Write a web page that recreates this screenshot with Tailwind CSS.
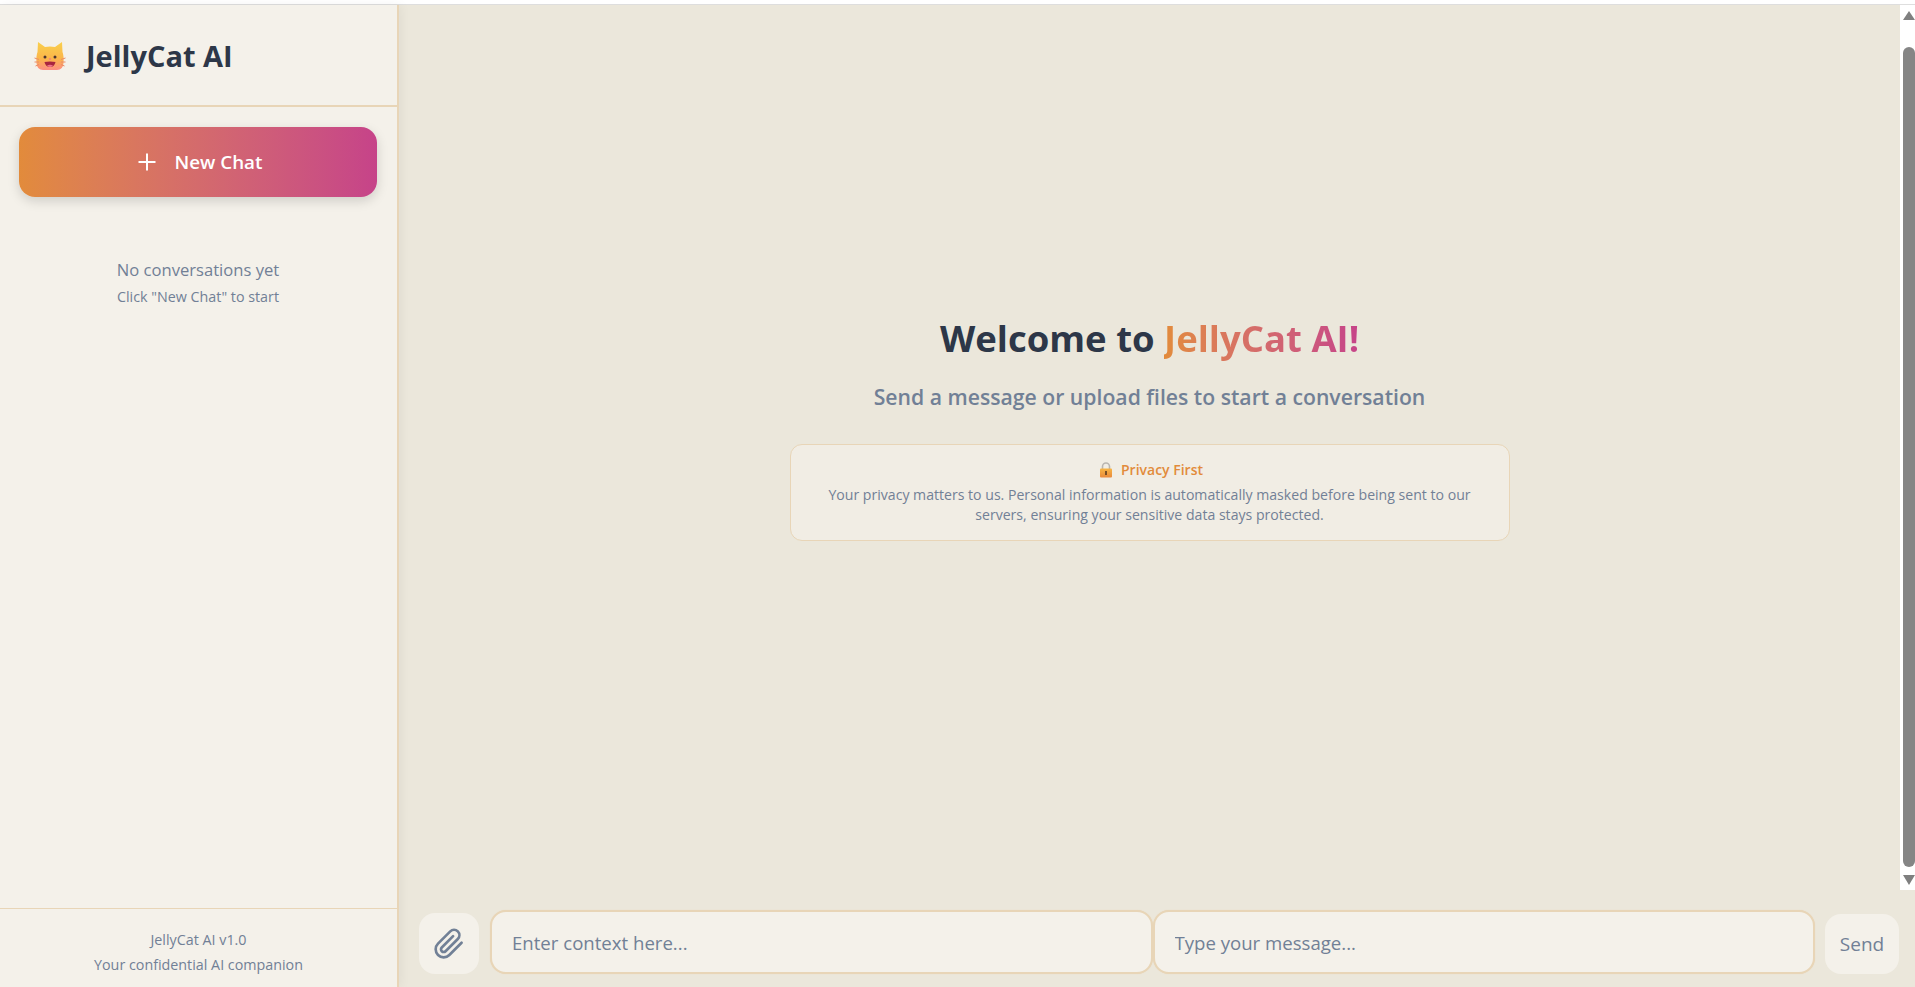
<!DOCTYPE html>
<html lang="en">
<head>
    <meta charset="UTF-8">
    <meta name="viewport" content="width=device-width, initial-scale=1.0">
    <title>JellyCat AI</title>
    <script src="https://cdn.jsdelivr.net/npm/@tailwindcss/browser@4"></script>
</head>
<body class="h-screen overflow-hidden flex flex-col bg-white font-['Open_Sans',sans-serif] text-[#718096]">
    <div class="h-[5px] shrink-0 bg-white border-b border-[#dedede]"></div>
    <div class="flex flex-1 min-h-0">
        <!-- Sidebar -->
        <aside class="relative z-10 w-[399px] shrink-0 flex flex-col bg-[#f4f1ea] border-r-2 border-[#e8d5b7] shadow-[2px_0_10px_rgba(0,0,0,0.05)]">
            <div class="h-[102px] shrink-0 flex items-center pl-[34px] gap-[20px] border-b-2 border-[#e8d5b7]">
                <svg class="w-[32px] h-[30px] mt-[2px]" viewBox="0 0 32 30">
                    <defs>
                        <linearGradient id="catFace" x1="0" y1="0" x2="0" y2="1">
                            <stop offset="0" stop-color="#f9d04c"/>
                            <stop offset="0.6" stop-color="#fbb54a"/>
                            <stop offset="1" stop-color="#fd8d84"/>
                        </linearGradient>
                    </defs>
                    <path d="M4 1 L11 6 Q16 5 21 6 L28 1 L28.500 11 Q30 15 29.500 22 Q29 29 23 29 H9 Q3 29 2.500 22 Q2 15 3.500 11 Z" fill="url(#catFace)"/>
                    <circle cx="11" cy="16" r="1.500" fill="#4a3330"/>
                    <circle cx="21" cy="16" r="1.500" fill="#4a3330"/>
                    <path d="M14.800 17.500 H17.200 L16 19 Z" fill="#f0609a"/>
                    <path d="M10.500 21 Q16 19.800 21.500 21 Q20.500 26 16 26 Q11.500 26 10.500 21 Z" fill="#a8253f"/>
                    <path d="M13 24.500 Q16 23 19 24.500 Q17.500 26 16 26 Q14.500 26 13 24.500 Z" fill="#f0708a"/>
                    <path d="M0.500 17 L5 18.500 M0.500 21 L5 21 M1.500 25 L5 23.500 M31.500 17 L27 18.500 M31.500 21 L27 21 M30.500 25 L27 23.500" stroke="#e98c68" stroke-width="1" fill="none"/>
                </svg>
                <h1 class="text-[29px] leading-none font-bold text-[#2d3748]">JellyCat AI</h1>
            </div>
            <div class="flex-1 pl-[19px] pr-[20px] pt-[20px]">
                <button class="w-full h-[70px] pl-[4px] flex items-center justify-center gap-[19px] rounded-[16px] bg-gradient-to-r from-[#e28b3b] to-[#c64389] text-white text-[18.800px] font-semibold shadow-[0_4px_12px_rgba(0,0,0,0.15)]">
                    <svg class="w-[18px] h-[18px]" viewBox="0 0 18 18" fill="none" stroke="#ffffff" stroke-width="2"><path d="M9 0.500 V17.500 M0.500 9 H17.500"/></svg>
                    <span>New Chat</span>
                </button>
                <div class="mt-[60px] text-center">
                    <p class="text-[16.600px] leading-[26px]">No conversations yet</p>
                    <p class="text-[14.300px] leading-[22px] mt-[3px]">Click "New Chat" to start</p>
                </div>
            </div>
            <div class="h-[79px] shrink-0 border-t border-[#e8d5b7] text-center text-[14.300px] leading-[25px] pt-[18px]">
                <p>JellyCat AI v1.0</p>
                <p>Your confidential AI companion</p>
            </div>
        </aside>

        <!-- Main -->
        <main class="flex-1 min-w-0 flex flex-col bg-[#ebe7db]">
            <div class="h-[885px] shrink-0 flex">
                <div class="flex-1 min-w-0 flex flex-col items-center pt-[308px]">
                    <h2 class="text-[36.500px] leading-[50px] font-bold text-[#2d3748]">Welcome to <span class="bg-gradient-to-r from-[#e28b3b] to-[#c64389] bg-clip-text text-transparent">JellyCat AI!</span></h2>
                    <p class="mt-[19px] text-[21.200px] leading-[30px] font-semibold">Send a message or upload files to start a conversation</p>
                    <div class="mt-[32px] w-[720px] h-[97px] rounded-[12px] border border-[#e8d5b7] bg-[#f1ede4] flex flex-col items-center pt-[15px] text-[14.100px] leading-[20px] text-center">
                        <div class="flex items-center gap-[8px] pl-[3px] text-[#e28b3b] font-semibold text-[14px]">
                            <svg class="w-[14px] h-[16px]" viewBox="0 0 14 16">
                                <defs>
                                    <linearGradient id="lockBody" x1="0" y1="0" x2="0" y2="1">
                                        <stop offset="0" stop-color="#f7b545"/>
                                        <stop offset="1" stop-color="#e98a3c"/>
                                    </linearGradient>
                                </defs>
                                <path d="M3.500 8 V4.500 a3.500 3.500 0 0 1 7 0 V8" fill="none" stroke="#b9b5b0" stroke-width="1.600"/>
                                <rect x="1" y="6.500" width="12" height="9" rx="1" fill="url(#lockBody)"/>
                                <rect x="6.200" y="9" width="1.600" height="4" fill="#5a3a20"/>
                            </svg>
                            <span>Privacy First</span>
                        </div>
                        <p class="w-[660px] mt-[5px]">Your privacy matters to us. Personal information is automatically masked before being sent to our servers, ensuring your sensitive data stays protected.</p>
                    </div>
                </div>
                <!-- Scrollbar -->
                <div class="w-[15px] shrink-0 bg-white flex flex-col items-start pl-[3px] pt-[6px] pb-[5px]">
                    <div class="w-0 h-0 border-x-[6px] border-x-transparent border-b-[9px] border-b-[#7f7f7f]"></div>
                    <div class="w-[12px] flex-1 mt-[27px] mb-[8px] rounded-[6px] bg-[#858585]"></div>
                    <div class="w-0 h-0 border-x-[6px] border-x-transparent border-t-[10px] border-t-[#7f7f7f]"></div>
                </div>
            </div>
            <div class="flex-1 min-h-0 flex items-start pl-[20px] pr-[16px] pt-[20px]">
                <button class="w-[60px] h-[61px] shrink-0 mt-[3px] rounded-[16px] bg-[#f4f1ea] flex items-center justify-center">
                    <svg class="w-[32px] h-[32px]" viewBox="0 0 24 24" fill="none" stroke="#718096" stroke-width="2" stroke-linecap="round" stroke-linejoin="round"><path d="M21.440 11.050l-9.190 9.190a6 6 0 0 1-8.490-8.490l9.190-9.190a4 4 0 0 1 5.660 5.660l-9.200 9.190a2 2 0 0 1-2.830-2.830l8.490-8.480"/></svg>
                </button>
                <div class="flex-1 min-w-0 flex ml-[11px]">
                    <input type="text" placeholder="Enter context here..." class="flex-1 min-w-0 h-[64px] px-[20px] rounded-[16px] border-2 border-[#e8d5b7] bg-[#f4f1ea] shadow-[0_0_1px_#e8d5b7] text-[18.600px] outline-none placeholder:text-[#718096]">
                    <input type="text" placeholder="Type your message..." class="flex-1 min-w-0 h-[64px] px-[20px] rounded-[16px] border-2 border-[#e8d5b7] bg-[#f4f1ea] shadow-[0_0_1px_#e8d5b7] text-[18.600px] outline-none placeholder:text-[#718096]">
                </div>
                <button class="w-[74px] h-[60px] shrink-0 mt-[4px] ml-[10px] rounded-[16px] bg-[#f4f1ea] text-[19px]">Send</button>
            </div>
        </main>
    </div>
</body>
</html>
